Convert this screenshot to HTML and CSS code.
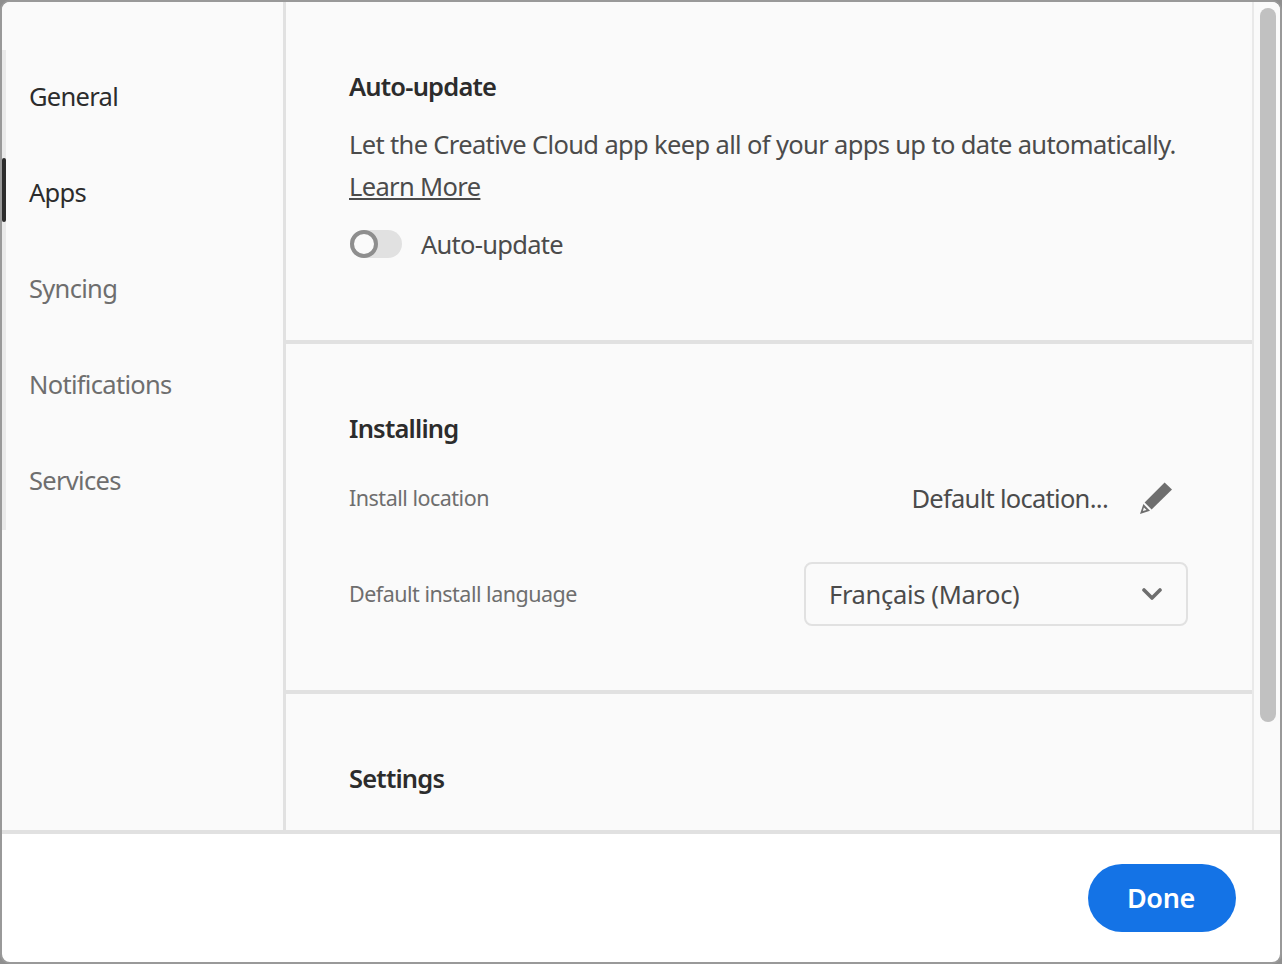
FILE: index.html
```html
<html>
    <head>
        <meta charset="utf-8">
        <meta name="viewport" content="width=device-width, initial-scale=1.0">
        <title>Preferences</title>
        <link rel="stylesheet" href="styles.css">
    </head>
    <body>
        <div class="window">
            <div class="top">
                <nav class="sidebar">
                    <ul class="nav">
                        <li class="nav-item on">General</li>
                        <li class="nav-item on current">Apps</li>
                        <li class="nav-item">Syncing</li>
                        <li class="nav-item">Notifications</li>
                        <li class="nav-item">Services</li>
                    </ul>
                </nav>
                <main class="content">
                    <section class="section first">
                        <h2 class="heading">Auto-update</h2>
                        <p class="text">Let the Creative Cloud app keep all of your apps up to date automatically. <a class="link" href="#">Learn More</a></p>
                        <div class="toggle-row">
                            <span class="toggle"><span class="knob"></span></span>
                            <span class="text">Auto-update</span>
                        </div>
                    </section>
                    <section class="section second">
                        <h2 class="heading">Installing</h2>
                        <div class="row">
                            <span class="label">Install location</span>
                            <span class="location">
                                <span class="text">Default location...</span>
                                <svg class="pencil" width="32" height="32" viewBox="0 0 32 32">
                                    <path fill="#6e6e6e" d="M24.6 0.4 L32 7.6 L11.6 27.6 L4.6 20.4 Z"/>
                                    <path fill="#6e6e6e" fill-rule="evenodd" d="M3.4 22 L10 28.8 L0 32 Z M3.9 25.4 L2.9 29 L6.5 27.9 Z"/>
                                </svg>
                            </span>
                        </div>
                        <div class="row">
                            <span class="label">Default install language</span>
                            <div class="select">
                                <span class="text">Français (Maroc)</span>
                                <svg width="20" height="14" viewBox="0 0 20 14">
                                    <path fill="none" stroke="#6e6e6e" stroke-width="3.6" stroke-linecap="round" stroke-linejoin="round" d="M2 3 L10 11 L18 3"/>
                                </svg>
                            </div>
                        </div>
                    </section>
                    <section class="section last">
                        <h2 class="heading">Settings</h2>
                    </section>
                </main>
                <div class="scrollbar"><div class="thumb"></div></div>
            </div>
            <footer class="footer">
                <button class="done" type="button">Done</button>
            </footer>
        </div>
    </body>
</html>
```

FILE: styles.css
```css
html, body {
    margin: 0;
    height: 100%;
    background-color: #8f8f8f;
    overflow: hidden;
}

body {
    font-family: "Noto Sans", sans-serif;
    color: #4b4b4b;
}

.window {
    box-sizing: border-box;
    height: 964px;
    display: flex;
    flex-direction: column;
    border: 2px solid #999;
    border-radius: 10px;
    overflow: hidden;
    background-color: white;
}

.top {
    display: flex;
    height: 828px;
    flex: none;
    background-color: #fafafa;
    border-bottom: 4px solid #e1e1e1;
    box-sizing: content-box;
}

.sidebar {
    box-sizing: border-box;
    width: 281px;
    padding-top: 48px;
    flex: none;
}

.nav {
    list-style: none;
    margin: 0;
    padding: 0;
    border-left: 4px solid #eaeaea;
}

.nav-item {
    position: relative;
    height: 96px;
    line-height: 92px;
    padding-left: 23px;
    font-size: 25.5px;
    letter-spacing: -0.7px;
    color: #6e6e6e;
}

.nav-item.on {
    color: #2c2c2c;
}

.current::before {
    content: "";
    position: absolute;
    left: -4px;
    top: 12px;
    width: 4px;
    height: 64px;
    border-radius: 2px;
    background-color: #2c2c2c;
}

.content {
    box-sizing: border-box;
    flex: none;
    width: 971px;
    overflow: hidden;
    border-left: 3px solid #e1e1e1;
    border-right: 2px solid #e9e9e9;
}

.section {
    box-sizing: border-box;
    padding: 65px 64px 0 63px;
    border-bottom: 4px solid #e1e1e1;
}

.first {
    height: 342px;
}

.second {
    height: 350px;
}

.last {
    border-bottom: none;
}

.heading {
    margin: 0;
    font-size: 25.5px;
    line-height: 38px;
    font-weight: 600;
    letter-spacing: -0.8px;
    color: #2c2c2c;
}

.text {
    font-size: 25.5px;
    letter-spacing: -0.72px;
    color: #4b4b4b;
    white-space: nowrap;
}

p.text {
    margin: 18px 0 0;
    line-height: 42px;
    letter-spacing: -0.65px;
    white-space: normal;
}

.link {
    color: #4b4b4b;
}

.toggle-row {
    display: flex;
    align-items: center;
    gap: 19px;
    margin-top: 22px;
    height: 30px;
}

.toggle {
    display: block;
    width: 52px;
    height: 28px;
    margin-left: 1px;
    border-radius: 14px;
    background-color: #e1e1e1;
}

.knob {
    display: block;
    box-sizing: border-box;
    width: 28px;
    height: 28px;
    border: 4px solid #8e8e8e;
    border-radius: 50%;
    background-color: #fafafa;
}

.row {
    display: flex;
    align-items: center;
    justify-content: space-between;
    height: 64px;
    margin-top: 32px;
}

.second .heading + .row {
    margin-top: 19px;
}

.label {
    padding-bottom: 2px;
    font-size: 21.5px;
    letter-spacing: -0.5px;
    color: #6e6e6e;
    white-space: nowrap;
}

.location {
    display: flex;
    align-items: center;
    gap: 32px;
    padding-right: 16px;
}

.select {
    box-sizing: border-box;
    width: 384px;
    height: 64px;
    display: flex;
    align-items: center;
    justify-content: space-between;
    padding: 0 24px 0 23px;
    border: 2px solid #e1e1e1;
    border-radius: 8px;
}

.select .text {
    letter-spacing: -0.33px;
}

.scrollbar {
    flex: 1;
    padding: 6px;
}

.thumb {
    width: 16px;
    height: 714px;
    border-radius: 8px;
    background-color: #c1c1c1;
}

.footer {
    flex: 1;
    display: flex;
    justify-content: flex-end;
    align-items: flex-start;
    padding: 30px 44px 0 0;
}

.done {
    width: 148px;
    height: 68px;
    padding: 0 2px 2px 0;
    border: none;
    border-radius: 34px;
    background-color: #1473e6;
    color: white;
    font-family: "Noto Sans", sans-serif;
    font-size: 27px;
    font-weight: 600;
    letter-spacing: -0.3px;
}
```
